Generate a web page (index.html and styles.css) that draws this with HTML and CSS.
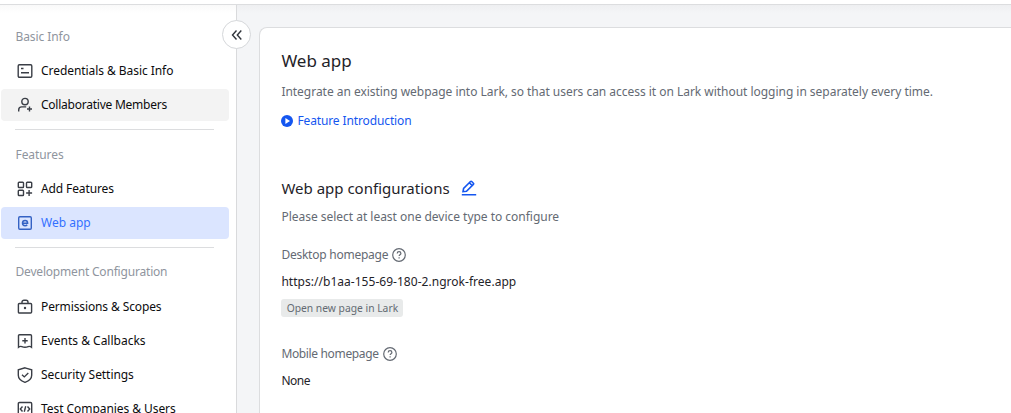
FILE: index.html
```html
<!DOCTYPE html>
<html lang="en">
<head>
<meta charset="utf-8">
<title>Web app</title>
<link rel="stylesheet" href="styles.css">
</head>
<body>
<header class="topbar"></header>
<div class="layout">
  <nav class="sidebar">
    <button class="collapse" aria-label="Collapse"><svg width="14" height="14" viewBox="0 0 14 14"><path d="M6.500 2.500 2.500 7l4 4.500M11.300 2.500 7.300 7l4 4.500"/></svg></button>
    <section class="group">
      <h3 class="label">Basic Info</h3>
      <a class="item"><svg class="icon" viewBox="0 0 16 16"><rect x="1.200" y="1.700" width="13.600" height="12.600" rx="1.200"/><path d="M4 5.500h2.500M4 9.700h8"/></svg><span class="t-cred">Credentials &amp; Basic Info</span></a>
      <a class="item hover"><svg class="icon" viewBox="0 0 16 16"><circle cx="8" cy="4.600" r="3.200"/><path d="M1.700 14.500v-1.600a3 3 0 0 1 3-3h4.500M12.500 9.500v5M10 12h5"/></svg><span class="t-collab">Collaborative Members</span></a>
    </section>
    <section class="group">
      <h3 class="label">Features</h3>
      <a class="item"><svg class="icon" viewBox="0 0 16 16"><rect x="1.300" y="1.300" width="5.200" height="5.200" rx=".8"/><rect x="9.500" y="1.300" width="5.200" height="5.200" rx=".8"/><rect x="1.300" y="9.300" width="5.200" height="5.200" rx=".8"/><path d="M12.100 9v6M9.100 12h6"/></svg><span class="t-add">Add Features</span></a>
      <a class="item active"><svg class="icon" viewBox="0 0 16 16"><rect x="1.700" y="1.700" width="12.600" height="12.600" rx="1.200"/><path class="heavy" d="M5.700 8.200h4.900c0-1.700-1-2.700-2.500-2.700S5.500 6.600 5.500 8.100s1 2.600 2.600 2.600c.9 0 1.600-.3 2.100-.9"/></svg><span>Web app</span></a>
    </section>
    <section class="group">
      <h3 class="label wide">Development Configuration</h3>
      <a class="item"><svg class="icon" viewBox="0 0 16 16"><rect x="1.400" y="4.500" width="13.200" height="9.500" rx="1"/><path d="M5 4.500V3.200A2 2 0 0 1 7 1.200h2a2 2 0 0 1 2 2v1.300"/><circle class="dot" cx="8" cy="9" r="1.200"/></svg><span class="t-perm">Permissions &amp; Scopes</span></a>
      <a class="item"><svg class="icon" viewBox="0 0 16 16"><path d="M1.500 14.300V2.700q0-1 1-1h11q1 0 1 1v11.600q-1.700-1.300-3.300-.7-1.600.7-3.200.7t-3.200-.7q-1.600-.6-3.300.7zM8 5v5.400M5.300 7.700h5.400"/></svg><span>Events &amp; Callbacks</span></a>
      <a class="item"><svg class="icon" viewBox="0 0 16 16"><path d="m8 .8 6.700 2v5.400c0 3.500-3 5.700-6.700 7.100-3.700-1.400-6.700-3.600-6.700-7.100V2.800zM5 7.700l2.300 2.200 4-3.900"/></svg><span class="t-sec">Security Settings</span></a>
      <a class="item"><svg class="icon" viewBox="0 0 16 16"><rect x="1.300" y="1.500" width="13.400" height="13" rx="1.200"/><path d="M5.500 5.500 3.300 8l2.200 2.500M10.500 5.500 12.700 8l-2.200 2.500M8.700 5.300l-1.400 5.400"/></svg><span class="t-test">Test Companies &amp; Users</span></a>
    </section>
  </nav>
  <main class="content">
    <article class="card">
      <h1 class="title">Web app</h1>
      <p class="desc">Integrate an existing webpage into Lark, so that users can access it on Lark without logging in separately every time.</p>
      <a class="intro"><svg width="12" height="12" viewBox="0 0 12 12"><circle cx="6" cy="6" r="6" fill="#1456f0"/><path d="M4.400 3 9 6 4.400 9z" fill="#fff"/></svg><span>Feature Introduction</span></a>
      <h2 class="config"><span>Web app configurations</span><svg class="edit" width="16" height="16" viewBox="0 0 16 16"><path d="M.8 14.800h14.400M2 11.700l.6-3.300 6.900-6.900q.6-.6 1.200 0l1.700 1.700q.6.600 0 1.200l-6.900 6.900zM8.400 2.800l2.800 2.800"/></svg></h2>
      <p class="hint">Please select at least one device type to configure</p>
      <div class="field"><span>Desktop homepage</span><svg class="help" viewBox="0 0 14 14"><circle cx="7" cy="7" r="6.300"/><path d="M5.200 5.500c0-1.100.8-1.800 1.900-1.800s1.800.7 1.800 1.700c0 1.300-1.800 1.300-1.800 2.700M7.100 9.300v1.200"/></svg></div>
      <div class="value url">https://b1aa-155-69-180-2.ngrok-free.app</div>
      <span class="tag">Open new page in Lark</span>
      <div class="field mobile"><span>Mobile homepage</span><svg class="help" viewBox="0 0 14 14"><circle cx="7" cy="7" r="6.300"/><path d="M5.200 5.500c0-1.100.8-1.800 1.900-1.800s1.800.7 1.800 1.700c0 1.300-1.800 1.300-1.800 2.700M7.100 9.300v1.200"/></svg></div>
      <div class="value none">None</div>
    </article>
  </main>
</div>
</body>
</html>
```
FILE: styles.css
```css
* { box-sizing: border-box; }
body { margin: 0; height: 413px; overflow: hidden; font: 12px/20px "Noto Sans", sans-serif; color: #1f2329; background: #f5f6f7; }
h1, h2, h3, p { margin: 0; font-weight: 400; }
svg { flex: none; fill: none; stroke: currentColor; stroke-width: 1.4; }
.topbar { height: 5px; background: #fff; border-bottom: 1px solid #dcdddf; }
.layout { display: flex; height: 408px; background: linear-gradient(#eeeff1, #f4f5f7 8px); }
.sidebar { position: relative; flex: none; width: 237px; padding-top: 22px; background: linear-gradient(#f9f9f9, #fff 8px); border-right: 1px solid #d9dadc; }
.collapse { position: absolute; right: -15px; top: 15px; width: 29px; height: 29px; padding: 0; display: flex; align-items: center; justify-content: center; color: #30343b; background: #fff; border: 1px solid #d5d7da; border-radius: 50%; }
.group { padding: 0 7px 8px 1px; }
.group:last-child { padding-bottom: 0; }
.group + .group::before { content: ""; display: block; height: 1px; margin: 0 15px 15px 14px; background: #dcdddf; }
.label { height: 28px; padding-left: 14.500px; font-size: 12px; color: #8f959e; letter-spacing: -.08px; }
.wide { line-height: 18px; letter-spacing: -.19px; }
.item { display: flex; align-items: center; gap: 8px; height: 32px; margin-bottom: 2px; padding-left: 16px; border-radius: 4px; color: #0c0c0e; white-space: nowrap; }
.group .item:last-child { margin-bottom: 0; }
.icon { width: 16px; height: 16px; color: #3a3e46; }
.hover { background: #f3f3f3; }
.active { color: #3370ff; background: #dbe5ff; }
.active .icon { color: #3462c4; }
.t-cred, .t-sec, .t-test { letter-spacing: -.06px; }
.t-collab { letter-spacing: -.24px; }
.t-add { letter-spacing: -.12px; }
.t-perm { letter-spacing: -.12px; }
.heavy { stroke-width: 1.5; }
.dot { fill: currentColor; stroke: none; }
.content { flex: 1; min-width: 0; padding: 22px 0 0 22px; }
.card { height: 100%; padding: 21px 0 0 21.400px; background: #fff; border: solid #dcdddf; border-width: 1px 0 0 1px; border-radius: 8px 0 0; }
.title { height: 33px; font-size: 17px; line-height: 24px; }
.desc { height: 29px; color: #646a73; white-space: nowrap; letter-spacing: -.03px; }
.intro { display: flex; align-items: center; gap: 4px; width: max-content; height: 20px; color: #1456f0; letter-spacing: -.12px; }
.intro svg { stroke: none; }
.config { display: flex; align-items: center; gap: 11px; height: 24px; margin-top: 45px; font-size: 15px; line-height: 24px; }
.edit { color: #1456f0; stroke-width: 1.6; }
.hint { margin-top: 7px; color: #646a73; letter-spacing: -.02px; }
.field { display: flex; align-items: center; gap: 4px; height: 20px; margin-top: 18px; color: #646a73; letter-spacing: -.24px; }
.help { width: 14px; height: 14px; stroke-width: 1.2; }
.value { height: 20px; margin-top: 7px; }
.url { letter-spacing: .03px; }
.none { letter-spacing: -.5px; }
.tag { display: flex; align-items: center; justify-content: center; width: 122px; height: 18px; margin-top: 7px; font-size: 10.300px; line-height: 18px; color: #646a73; background: #e8eaea; border-radius: 3px; white-space: nowrap; }
.mobile { margin-top: 27px; letter-spacing: -.35px; }
```
